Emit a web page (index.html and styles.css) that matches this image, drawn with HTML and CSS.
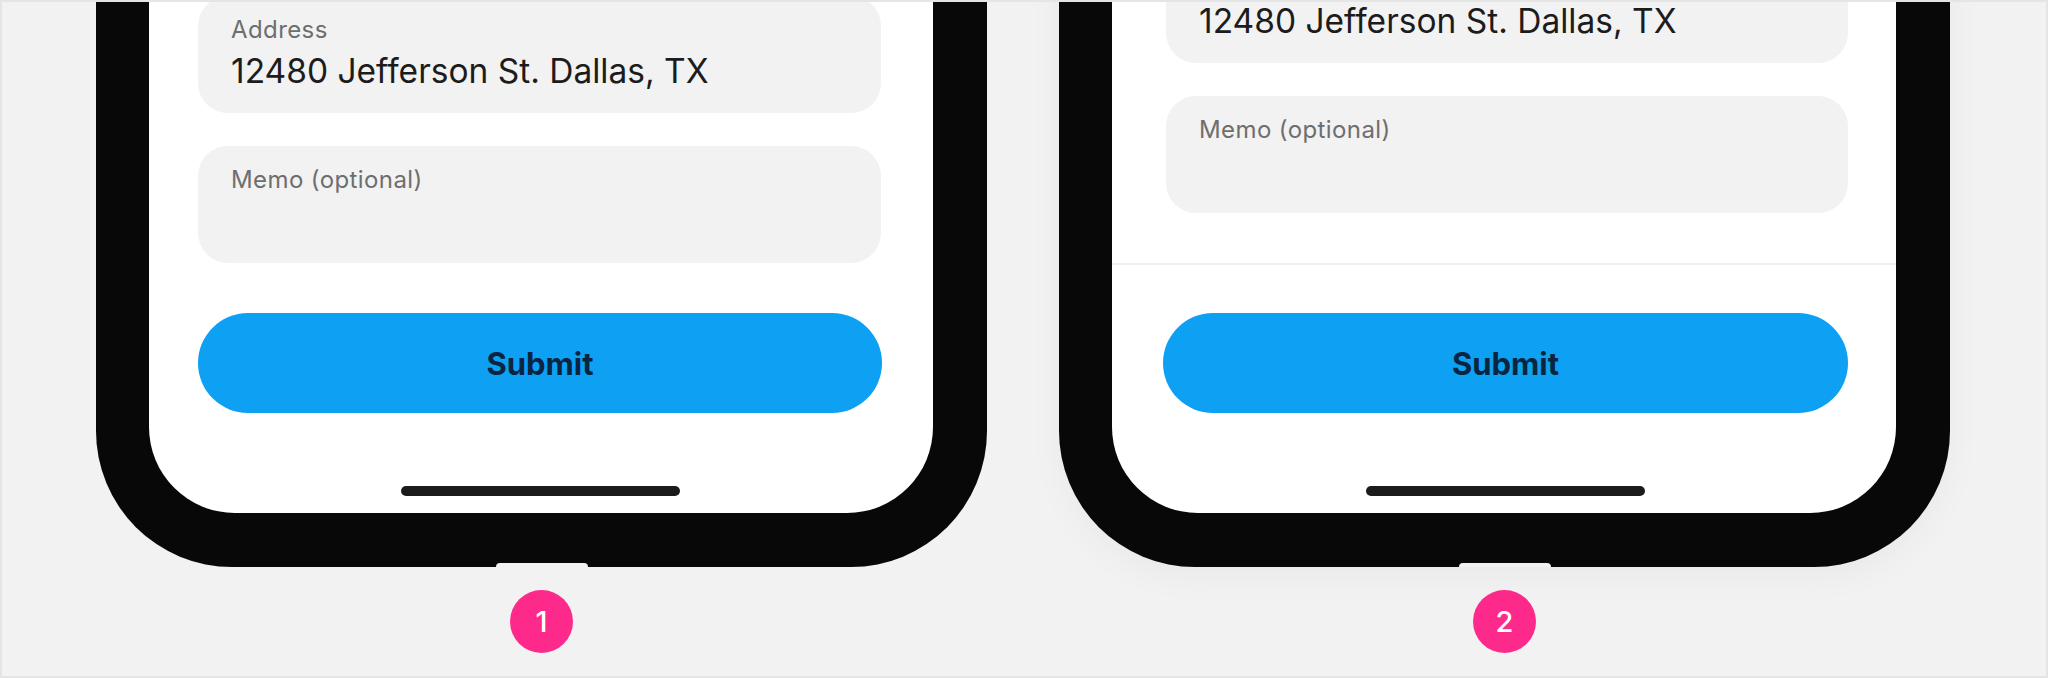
FILE: index.html
```html
<!DOCTYPE html>
<html lang="en">
<head>
<meta charset="utf-8">
<title>Form footer comparison</title>
<link rel="stylesheet" href="styles.css">
</head>
<body>
<div class="stage">
  <div class="column">
    <div class="phone">
      <div class="screen">
        <div class="form form--one">
          <div class="field">
            <div class="field-label">Address</div>
            <div class="field-value">12480 Jefferson St. Dallas, TX</div>
          </div>
          <div class="field">
            <div class="field-label">Memo (optional)</div>
          </div>
        </div>
        <div class="footer footer--one">
          <button class="submit" type="button">Submit</button>
          <div class="home-indicator"></div>
        </div>
      </div>
    </div>
    <div class="badge">1</div>
  </div>
  <div class="column">
    <div class="phone phone--shadow">
      <div class="screen">
        <div class="form form--two">
          <div class="field">
            <div class="field-label">Address</div>
            <div class="field-value">12480 Jefferson St. Dallas, TX</div>
          </div>
          <div class="field">
            <div class="field-label">Memo (optional)</div>
          </div>
        </div>
        <div class="footer footer--divided footer--two">
          <button class="submit" type="button">Submit</button>
          <div class="home-indicator"></div>
        </div>
      </div>
    </div>
    <div class="badge">2</div>
  </div>
</div>
</body>
</html>
```

FILE: styles.css
```css
* { box-sizing: border-box; }

html, body {
  margin: 0;
  padding: 0;
  background: #f2f2f2;
}

body {
  font-family: "Inter", "Noto Sans", sans-serif;
}

.stage {
  width: 2048px;
  height: 678px;
  border: 2px solid #e5e5e5;
  background: #f2f2f2;
  overflow: hidden;
  display: flex;
  justify-content: center;
  align-items: flex-end;
  gap: 72px;
  padding: 0 2px 23px 0;
}

.column {
  display: flex;
  flex-direction: column;
  align-items: center;
  gap: 23px;
}

.phone {
  position: relative;
  width: 891px;
  background: #080808;
  border-radius: 0 0 136px 136px;
  padding: 0 54px 54px 53px;
}

.phone--shadow {
  box-shadow: 0 10px 36px rgba(0, 0, 0, 0.04);
}

.phone::after {
  content: "";
  position: absolute;
  left: 50%;
  bottom: 0;
  width: 92px;
  height: 4px;
  margin-left: -46px;
  background: #f2f2f2;
  border-radius: 4px 4px 0 0;
}

.screen {
  background: #ffffff;
  border-radius: 0 0 86px 86px;
  display: flex;
  flex-direction: column;
}

.form {
  display: flex;
  flex-direction: column;
  gap: 33px;
}

.form--one { padding: 24px 52px 0 49px; }
.form--two { padding: 24px 48px 50px 54px; }

.field {
  height: 117px;
  background: #f2f2f2;
  border-radius: 30px;
  padding: 20px 33px 0;
}

.field-label {
  font-size: 24px;
  line-height: 28px;
  letter-spacing: 0.4px;
  color: #6e6e6e;
}

.field-value {
  margin-top: 7px;
  font-size: 33.5px;
  line-height: 40px;
  color: #1c1c1c;
}

.footer {
  display: flex;
  flex-direction: column;
  align-items: center;
  padding-top: 48px;
  padding-bottom: 17px;
  border-top: 2px solid transparent;
}

.footer--one { padding-left: 49px; padding-right: 51px; }
.footer--two { padding-left: 51px; padding-right: 48px; }

.footer--divided {
  border-top-color: #f0f0f0;
}

.submit {
  width: 100%;
  height: 100px;
  border: 0;
  border-radius: 50px;
  background: #0ea0f3;
  color: #0a2540;
  font-family: "Inter", "Noto Sans", sans-serif;
  font-weight: 700;
  font-size: 31px;
  padding: 0;
  margin: 0;
}

.home-indicator {
  margin-top: 73px;
  width: 279px;
  height: 10px;
  border-radius: 5px;
  background: #1b1b1b;
}

.badge {
  width: 63px;
  height: 63px;
  border-radius: 50%;
  background: #fe2a8b;
  color: #ffffff;
  font-size: 29px;
  font-weight: 500;
  display: flex;
  align-items: center;
  justify-content: center;
  line-height: 1;
}
```
